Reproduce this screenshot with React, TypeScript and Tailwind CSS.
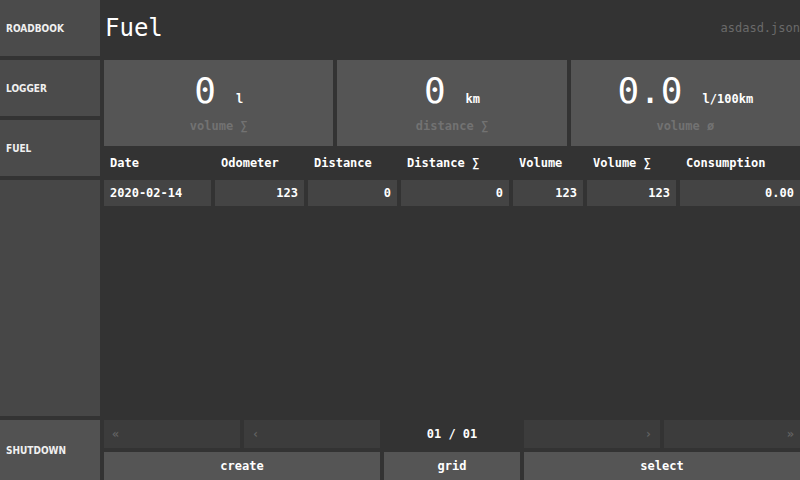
import React from 'react'

const mono = "font-['DejaVu_Sans_Mono','Liberation_Mono',monospace]"

const rows = [
  { date: '2020-02-14', odo: '123', dist: '0', distSum: '0', vol: '123', volSum: '123', cons: '0.00' },
]

function NavButton({ label, className = '' }: { label: string; className?: string }) {
  return (
    <div
      className={`flex items-center px-[6px] text-[10px] font-bold text-[#f0f0f0] font-['DejaVu_Sans_Condensed','DejaVu_Sans',sans-serif] ${className}`}
    >
      {label}
    </div>
  )
}

function StatCard({ value, unit, label }: { value: string; unit: string; label: string }) {
  return (
    <div className="flex flex-col items-center justify-center bg-[#555555]">
      <div className="mt-[2px] flex items-baseline gap-[20px]">
        <span className={`${mono} text-[36px] leading-none text-white`}>{value}</span>
        <span className={`${mono} text-[12px] font-bold text-white`}>{unit}</span>
      </div>
      <span className={`${mono} mt-[8px] text-[12px] font-bold text-[#727272]`}>{label}</span>
    </div>
  )
}

export default function App() {
  const headers = ['Date', 'Odometer', 'Distance', 'Distance ∑', 'Volume', 'Volume ∑', 'Consumption']

  return (
    <div className="flex h-[480px] w-[800px] overflow-hidden bg-[#333333]">
      {/* Sidebar */}
      <div className="flex w-[100px] shrink-0 flex-col gap-[4px]">
        <NavButton label="ROADBOOK" className="h-[56px] bg-[#4b4b4b]" />
        <NavButton label="LOGGER" className="h-[56px] bg-[#4b4b4b]" />
        <NavButton label="FUEL" className="h-[56px] bg-[#4b4b4b]" />
        <div className="flex-1 bg-[#474747]" />
        <NavButton label="SHUTDOWN" className="h-[60px] bg-[#525252]" />
      </div>

      {/* Main */}
      <div className="flex min-w-0 flex-1 flex-col pl-[4px]">
        <div className="flex h-[56px] items-center justify-between">
          <span className={`${mono} pl-[1px] text-[24px] text-white`}>Fuel</span>
          <span className={`${mono} text-[12px] text-[#6a6a6a]`}>asdasd.json</span>
        </div>

        <div className="mt-[4px] grid h-[86px] grid-cols-3 gap-[4px]">
          <StatCard value="0" unit="l" label="volume ∑" />
          <StatCard value="0" unit="km" label="distance ∑" />
          <StatCard value="0.0" unit="l/100km" label="volume ø" />
        </div>

        <div className="mt-[4px] grid grid-cols-[107px_89px_89px_108px_70px_89px_1fr] gap-[4px]">
          {headers.map((h) => (
            <div key={h} className={`${mono} flex h-[26px] items-center px-[6px] text-[12px] font-bold text-white`}>
              {h}
            </div>
          ))}
          {rows.map((r) => (
            <React.Fragment key={r.date}>
              <div className={`${mono} flex h-[26px] items-center bg-[#444444] px-[6px] text-[12px] font-bold text-white`}>
                {r.date}
              </div>
              {[r.odo, r.dist, r.distSum, r.vol, r.volSum, r.cons].map((v, i) => (
                <div
                  key={i}
                  className={`${mono} flex h-[26px] items-center justify-end bg-[#444444] px-[6px] text-[12px] font-bold text-white`}
                >
                  {v}
                </div>
              ))}
            </React.Fragment>
          ))}
        </div>

        <div className="flex-1" />

        {/* Pager */}
        <div className="grid h-[28px] grid-cols-[136px_136px_136px_136px_1fr] gap-[4px]">
          <div className={`${mono} flex items-center bg-[#3c3c3c] px-[8px] text-[12px] font-bold text-[#626262]`}>«</div>
          <div className={`${mono} flex items-center bg-[#3c3c3c] px-[8px] text-[12px] font-bold text-[#626262]`}>‹</div>
          <div className={`${mono} flex items-center justify-center text-[12px] font-bold text-white`}>01 / 01</div>
          <div className={`${mono} flex items-center justify-end bg-[#3c3c3c] px-[8px] text-[12px] font-bold text-[#626262]`}>›</div>
          <div className={`${mono} flex items-center justify-end bg-[#3c3c3c] px-[6px] text-[12px] font-bold text-[#626262]`}>»</div>
        </div>

        <div className="mt-[4px] grid h-[28px] grid-cols-[276px_136px_1fr] gap-[4px]">
          <div className={`${mono} flex items-center justify-center bg-[#555555] text-[12px] font-bold text-white`}>create</div>
          <div className={`${mono} flex items-center justify-center bg-[#555555] text-[12px] font-bold text-white`}>grid</div>
          <div className={`${mono} flex items-center justify-center bg-[#555555] text-[12px] font-bold text-white`}>select</div>
        </div>
      </div>
    </div>
  )
}
